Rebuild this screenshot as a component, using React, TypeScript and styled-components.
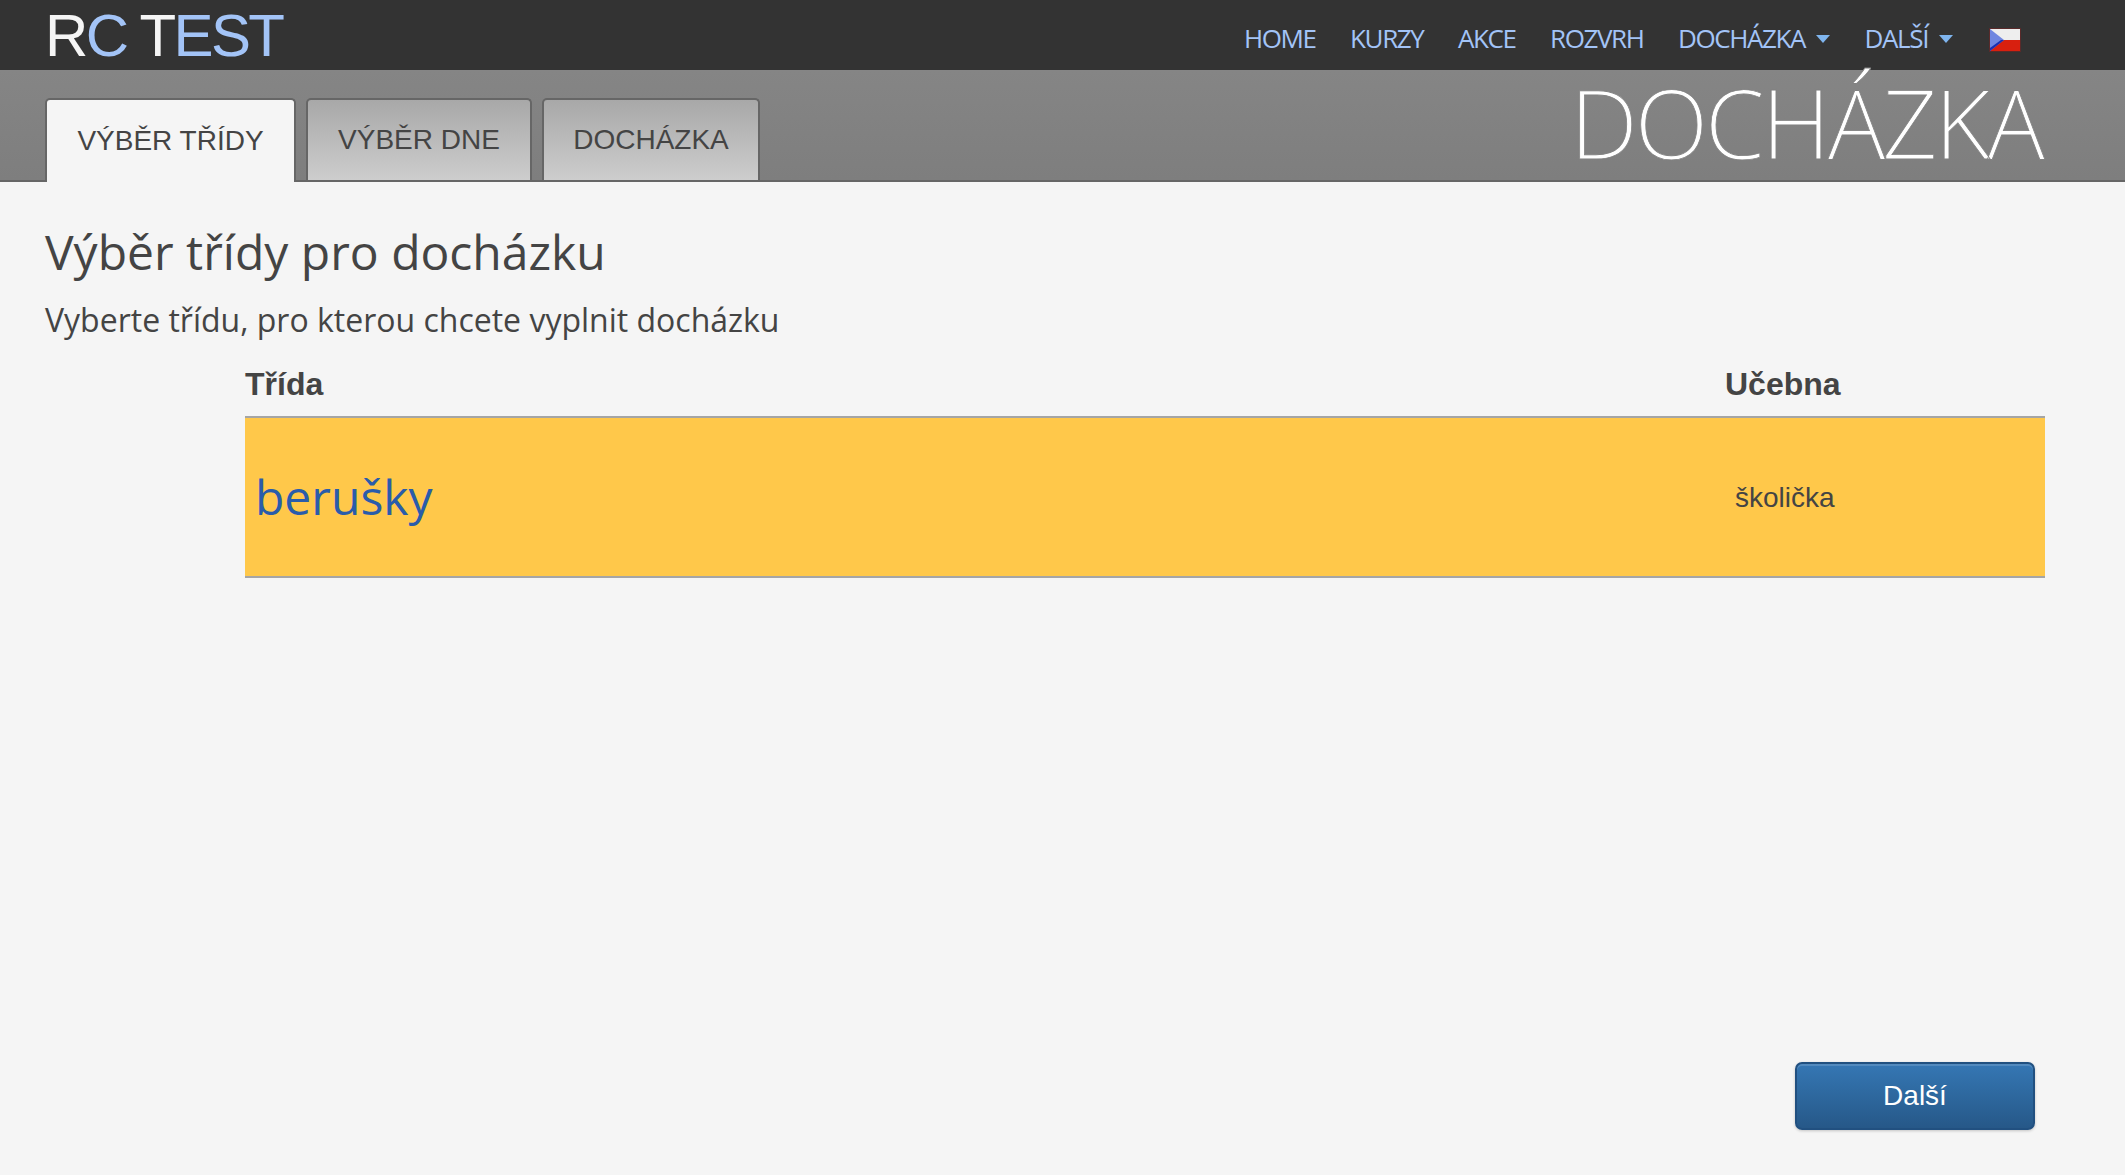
import React from "react";
import styled, { createGlobalStyle } from "styled-components";

const Global = createGlobalStyle`
  html, body { margin: 0; padding: 0; background: #f5f5f5; }
  body { font-family: "Liberation Sans", Arial, sans-serif; color: #444; }
`;

const Page = styled.div`
  display: flex;
  flex-direction: column;
  height: 1175px;
  overflow: hidden;
`;

const TopBar = styled.header`
  height: 70px;
  background: #333;
  display: flex;
  align-items: center;
  justify-content: space-between;
  padding: 0 104px 0 45px;
`;

const Logo = styled.div`
  padding-top: 1px;
  font: 400 60px/69px "Liberation Sans", Arial, sans-serif;
  letter-spacing: -2.6px;
  color: #f5f5f5;
  white-space: nowrap;
`;

const LogoAccent = styled.span`
  color: #a3c4f7;
`;

const Nav = styled.nav`
  display: flex;
  align-items: center;
  gap: 34.5px;
`;

const NavLink = styled.a`
  display: flex;
  align-items: center;
  gap: 11px;
  padding-top: 6px;
  font: 400 26px/64px "Open Sans", sans-serif;
  letter-spacing: -1.4px;
  color: #a3c4f7;
  white-space: nowrap;
`;

const Caret = styled.i`
  width: 0;
  height: 0;
  margin-top: 2px;
  border-left: 7.5px solid transparent;
  border-right: 7.5px solid transparent;
  border-top: 8px solid #7fb5ee;
`;

const FlagIcon = styled.svg`
  margin: 10px 0 0 1.5px;
`;

const Band = styled.div`
  height: 110px;
  background: linear-gradient(#858585, #7e7e7e);
  border-bottom: 2px solid #666;
  display: flex;
  align-items: flex-end;
  justify-content: space-between;
  padding: 0 83px 0 45px;
`;

const Tabs = styled.div`
  display: flex;
  gap: 10px;
  align-items: flex-end;
`;

const Tab = styled.div<{ $active?: boolean; $w: number }>`
  width: ${(p) => p.$w}px;
  height: ${(p) => (p.$active ? 84 : 82)}px;
  margin-bottom: ${(p) => (p.$active ? -2 : 0)}px;
  box-sizing: border-box;
  border: 2px solid #666;
  border-bottom: none;
  border-radius: 5px 5px 0 0;
  background: ${(p) => (p.$active ? "#f5f5f5" : "linear-gradient(#a8a8a8, #cdcdcd)")};
  display: flex;
  align-items: center;
  justify-content: center;
  font: 400 28px/1 "Liberation Sans", Arial, sans-serif;
  color: #444;
  white-space: nowrap;
`;

const PageTitle = styled.div`
  font: 300 96px/104px "Open Sans", sans-serif;
  letter-spacing: -3px;
  color: #fff;
  -webkit-text-stroke: 0.8px #828282;
  white-space: nowrap;
  align-self: flex-start;
`;

const Main = styled.main`
  flex: 1;
  display: flex;
  flex-direction: column;
  padding: 0 80px 45px 45px;
`;

const Heading = styled.h1`
  margin: 40px 0 0;
  font: 400 48px/60px "Open Sans", sans-serif;
  color: #444;
`;

const Sub = styled.p`
  margin: 17px 0 0;
  font: 400 32px/42px "Open Sans", sans-serif;
  color: #444;
`;

const Table = styled.div`
  margin: 18px 0 0 200px;
  display: flex;
  flex-direction: column;
`;

const HeadRow = styled.div`
  display: flex;
  height: 50px;
  align-items: center;
  padding-bottom: 7px;
  border-bottom: 2px solid #a5a5a5;
  font: 700 32px/1 "Liberation Sans", Arial, sans-serif;
  color: #444;
`;

const DataRow = styled.div`
  display: flex;
  height: 158px;
  align-items: center;
  background: #ffc84a;
  border-bottom: 2px solid #a5a5a5;
`;

const ClassCol = styled.div`
  flex: 1;
`;

const RoomHead = styled.div`
  width: 320px;
`;

const ClassLink = styled.a`
  padding-left: 10px;
  font: 400 48px/1 "Open Sans", sans-serif;
  color: #2a5caa;
`;

const RoomCell = styled.div`
  width: 310px;
  padding-top: 2px;
  font: 400 28px/1 "Liberation Sans", Arial, sans-serif;
  color: #444;
`;

const Footer = styled.div`
  margin-top: auto;
  display: flex;
  justify-content: flex-end;
  padding-right: 10px;
`;

const NextButton = styled.button`
  width: 240px;
  height: 68px;
  padding: 0;
  border: 2px solid #215080;
  border-radius: 7px;
  background: linear-gradient(#3577b4, #265888);
  box-shadow: inset 0 2px 0 rgba(255, 255, 255, 0.15), 0 1px 3px rgba(0, 0, 0, 0.2);
  font: 400 28px/1 "Liberation Sans", Arial, sans-serif;
  color: #fff;
`;

const Flag = () => (
  <FlagIcon width="32" height="24" viewBox="0 0 32 24" aria-label="CZ">
    <rect width="32" height="24" fill="#5a2a2a" />
    <rect x="1" y="1" width="30" height="11" fill="#eeeeee" />
    <rect x="1" y="12" width="30" height="11" fill="#d8200f" />
    <path d="M1 1 L15 12 L1 23 Z" fill="#6f86e0" />
    <path d="M1 23 L15 12 L12 12 L1 20 Z" fill="#1a2fb0" />
  </FlagIcon>
);

export default function App() {
  return (
    <Page>
      <Global />
      <TopBar>
        <Logo>
          R<LogoAccent>C</LogoAccent> T<LogoAccent>EST</LogoAccent>
        </Logo>
        <Nav>
          <NavLink>HOME</NavLink>
          <NavLink>KURZY</NavLink>
          <NavLink>AKCE</NavLink>
          <NavLink>ROZVRH</NavLink>
          <NavLink>DOCHÁZKA<Caret /></NavLink>
          <NavLink>DALŠÍ<Caret /></NavLink>
          <Flag />
        </Nav>
      </TopBar>
      <Band>
        <Tabs>
          <Tab $active $w={251}>VÝBĚR TŘÍDY</Tab>
          <Tab $w={226}>VÝBĚR DNE</Tab>
          <Tab $w={218}>DOCHÁZKA</Tab>
        </Tabs>
        <PageTitle>DOCHÁZKA</PageTitle>
      </Band>
      <Main>
        <Heading>Výběr třídy pro docházku</Heading>
        <Sub>Vyberte třídu, pro kterou chcete vyplnit docházku</Sub>
        <Table>
          <HeadRow>
            <ClassCol>Třída</ClassCol>
            <RoomHead>Učebna</RoomHead>
          </HeadRow>
          <DataRow>
            <ClassCol><ClassLink>berušky</ClassLink></ClassCol>
            <RoomCell>školička</RoomCell>
          </DataRow>
        </Table>
        <Footer>
          <NextButton>Další</NextButton>
        </Footer>
      </Main>
    </Page>
  );
}
